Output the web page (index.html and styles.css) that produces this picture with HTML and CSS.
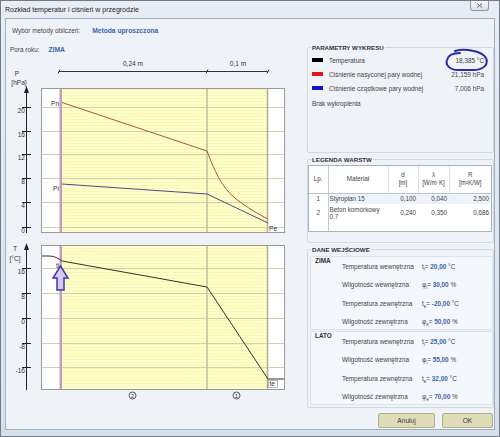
FILE: index.html
```html
<!DOCTYPE html>
<html lang="pl">
  <head>
    <meta charset="utf-8">
    <title>Rozkład temperatur i ciśnień w przegrodzie</title>
    <link rel="stylesheet" href="styles.css">
  </head>
  <body>
    <div class="window">

      <div class="titlebar">
        <span class="title">Rozkład temperatur i ciśnień w przegrodzie</span>
        <span class="close"><svg width="7" height="5" viewBox="0 0 7 5"><path d="M1 0.5 L6 4.5 M6 0.5 L1 4.5"/></svg></span>
      </div>

      <div class="client">

        <section class="chart-panel">
          <div class="field method"><span class="label">Wybór metody obliczeń:</span><span class="value">Metoda uproszczona</span></div>
          <div class="field season"><span class="label">Pora roku:</span><span class="value">ZIMA</span></div>

          <!-- the charts use page coordinates through the viewBox -->
          <svg class="charts" width="295" height="374" viewBox="6 55 295 374">
            <defs>
              <pattern id="layer-fill" width="4" height="3" patternUnits="userSpaceOnUse">
                <rect width="4" height="3" fill="#ffffc6"/>
                <rect y="2" width="4" height="1" fill="#f8f5bd"/>
              </pattern>
            </defs>

            <!-- thickness of layers -->
            <g class="dim">
              <line x1="59" y1="71.5" x2="268" y2="71.5"/>
              <path d="M58 73.5 L60 69.5 M206 73.5 L208 69.5 M267 73.5 L269 69.5"/>
              <text x="133" y="66" text-anchor="middle">0,24 m</text>
              <text x="238" y="66" text-anchor="middle">0,1 m</text>
            </g>

            <!-- pressure chart -->
            <g class="plot">
              <rect class="frame" x="41.5" y="88.5" width="243" height="144"/>
              <rect class="layer" x="62" y="89" width="205" height="143"/>
              <path class="grid" d="M42 107.5 H284 M42 131.5 H284 M42 154.5 H284 M42 178.5 H284 M42 202.5 H284 M42 227.5 H284"/>
              <line class="joint" x1="207" y1="89" x2="207" y2="232"/>
              <line class="edge" x1="267.5" y1="89" x2="267.5" y2="232"/>
              <rect class="membrane" x="59.5" y="89" width="2.5" height="143"/>
            </g>
            <g class="axis">
              <line x1="26.5" y1="91" x2="26.5" y2="233"/>
              <path class="arrow" d="M26.5 86 L24 93 L29 93 Z"/>
              <path d="M22 107.5 H31 M22 131.5 H31 M22 154.5 H31 M22 178.5 H31 M22 202.5 H31 M22 227.5 H31"/>
              <text x="17" y="75.5" text-anchor="middle">P</text>
              <text x="19" y="84.5" text-anchor="middle">[hPa]</text>
              <text x="25" y="113" text-anchor="end">20</text>
              <text x="25" y="137" text-anchor="end">16</text>
              <text x="25" y="160" text-anchor="end">12</text>
              <text x="25" y="184" text-anchor="end">8</text>
              <text x="25" y="208" text-anchor="end">4</text>
              <text x="25" y="233" text-anchor="end">0</text>
            </g>
            <path class="saturated" d="M62 102.5 L207 151 C214 170 222 188 236 199 C248 208 258 214 268 219"/>
            <path class="partial" d="M62 184 L207 194 L268 223"/>
            <text class="tag" x="51" y="105.5">Pn</text>
            <text class="tag" x="53" y="191">Pi</text>
            <text class="tag" x="269" y="230.5">Pe</text>

            <!-- temperature chart -->
            <g class="plot">
              <rect class="frame" x="41.5" y="245.5" width="243" height="144"/>
              <rect class="layer" x="62" y="246" width="205" height="143"/>
              <path class="grid" d="M42 268.5 H284 M42 293.5 H284 M42 318.5 H284 M42 343.5 H284 M42 367.5 H284"/>
              <line class="joint" x1="207" y1="246" x2="207" y2="389"/>
              <line class="edge" x1="267.5" y1="246" x2="267.5" y2="389"/>
              <rect class="membrane" x="59.5" y="246" width="2.5" height="143"/>
            </g>
            <g class="axis">
              <line x1="26.5" y1="248" x2="26.5" y2="390"/>
              <path class="arrow" d="M26.5 243 L24 250 L29 250 Z"/>
              <path d="M22 268.5 H31 M22 293.5 H31 M22 318.5 H31 M22 343.5 H31 M22 367.5 H31"/>
              <text x="15" y="250.5" text-anchor="middle">T</text>
              <text x="15" y="260.5" text-anchor="middle">[°C]</text>
              <text x="25" y="274" text-anchor="end">16</text>
              <text x="25" y="299" text-anchor="end">8</text>
              <text x="25" y="324" text-anchor="end">0</text>
              <text x="25" y="349" text-anchor="end">-8</text>
              <text x="25" y="373" text-anchor="end">-16</text>
            </g>
            <path class="temperature" d="M42 256 L49 256 C54 256 58 258 62 261 L207 287 L268 379 L284 379"/>
            <text class="tag" x="56" y="267.5">ti</text>
            <rect class="tag-box" x="268.5" y="380.5" width="9" height="7"/>
            <text class="tag" x="269.5" y="386">te</text>
            <path class="pointer" d="M60.5 266 L68 278 L64 278 L64 290 L57 290 L57 278 L53 278 Z"/>

            <g class="layer-no">
              <circle cx="132.5" cy="395.5" r="3.5"/>
              <text x="132.5" y="397.5" text-anchor="middle">2</text>
              <circle cx="236.5" cy="395.5" r="3.5"/>
              <text x="236.5" y="397.5" text-anchor="middle">1</text>
            </g>
          </svg>
        </section>

        <section class="side-panel">

          <fieldset class="group params">
            <legend>PARAMETRY WYKRESU</legend>
            <div class="series"><span class="swatch temp"></span><span class="name">Temperatura</span><span class="num">18,385 °C</span></div>
            <div class="series"><span class="swatch sat"></span><span class="name">Ciśnienie nasyconej pary wodnej</span><span class="num">21,159 hPa</span></div>
            <div class="series"><span class="swatch part"></span><span class="name">Ciśnienie cząstkowe pary wodnej</span><span class="num">7,006 hPa</span></div>
            <p class="note">Brak wykroplenia</p>
            <svg class="marker" width="46" height="26" viewBox="0 0 46 26"><path d="M10 3 C20 0 37 3 41 10 C44 17 38 22 28 22 L13 22 C5 22 0 17 2 12 C3 7 8 5 15 5"/></svg>
          </fieldset>

          <fieldset class="group layers">
            <legend>LEGENDA WARSTW</legend>
            <div class="table-box">
              <table>
                <colgroup><col class="c-lp"><col class="c-mat"><col class="c-d"><col class="c-l"><col class="c-r"></colgroup>
                <thead>
                  <tr><th class="lp">Lp.</th><th>Materiał</th><th>d<br>[m]</th><th>λ<br>[W/m·K]</th><th>R<br>[m²K/W]</th></tr>
                </thead>
                <tbody>
                  <tr class="row-1"><td class="lp">1</td><td class="mat">Styropian 15</td><td>0,100</td><td>0,040</td><td>2,500</td></tr>
                  <tr class="row-2"><td class="lp">2</td><td class="mat">Beton komórkowy<br>0.7</td><td>0,240</td><td>0,350</td><td>0,686</td></tr>
                  <tr class="rest"><td class="lp"></td><td colspan="4"></td></tr>
                </tbody>
              </table>
            </div>
          </fieldset>

          <fieldset class="group inputs">
            <legend>DANE WEJŚCIOWE</legend>
            <div class="season-box">
              <h3>ZIMA</h3>
              <ul>
                <li><span class="name">Temperatura wewnętrzna</span><span class="val">t<sub>i</sub>= <b>20,00</b> °C</span></li>
                <li><span class="name">Wilgotność wewnętrzna</span><span class="val">φ<sub>i</sub>= <b>30,00</b> %</span></li>
                <li><span class="name">Temperatura zewnętrzna</span><span class="val">t<sub>e</sub>= <b>-20,00</b> °C</span></li>
                <li><span class="name">Wilgotność zewnętrzna</span><span class="val">φ<sub>e</sub>= <b>50,00</b> %</span></li>
              </ul>
            </div>
            <div class="season-box">
              <h3>LATO</h3>
              <ul>
                <li><span class="name">Temperatura wewnętrzna</span><span class="val">t<sub>i</sub>= <b>25,00</b> °C</span></li>
                <li><span class="name">Wilgotność wewnętrzna</span><span class="val">φ<sub>i</sub>= <b>55,00</b> %</span></li>
                <li><span class="name">Temperatura zewnętrzna</span><span class="val">t<sub>e</sub>= <b>32,00</b> °C</span></li>
                <li><span class="name">Wilgotność zewnętrzna</span><span class="val">φ<sub>e</sub>= <b>70,00</b> %</span></li>
              </ul>
            </div>
          </fieldset>

          <div class="buttons">
            <button class="btn cancel" type="button">Anuluj</button>
            <button class="btn ok" type="button">OK</button>
          </div>

        </section>
      </div>
    </div>
  </body>
</html>
```

FILE: styles.css
```css
html,
body {
  margin: 0;
  padding: 0;
}

*,
*:before,
*:after {
  box-sizing: border-box;
}

body {
  width: 500px;
  height: 437px;
  overflow: hidden;
  font-family: "Liberation Sans", Arial, sans-serif;
  font-size: 6.4px;
  color: #444;
}

/* window frame */

.window {
  width: 500px;
  height: 437px;
  border: 1px solid #717c88;
  background: linear-gradient(to bottom, #e7edf4, #d6e0ea);
  display: flex;
  flex-direction: column;
}

.titlebar {
  height: 17px;
  display: flex;
  justify-content: space-between;
  align-items: flex-start;
  padding: 0 10px 0 4px;
}

.title {
  margin-top: 4px;
  font-size: 7px;
  line-height: 9px;
  color: #1e1e1e;
}

.close {
  width: 19px;
  height: 10px;
  border: 1px solid #8e99a5;
  border-top: none;
  border-radius: 0 0 3px 3px;
  background: linear-gradient(#f8fafc, #d9e1e9);
  display: flex;
  align-items: center;
  justify-content: center;
}

.close path {
  stroke: #666;
  stroke-width: 1;
}

.client {
  flex: 1;
  margin: 0 4px 6px;
  border: 1px solid #a3afbc;
  background: #eff3f8;
  display: flex;
}

/* left: charts */

.chart-panel {
  width: 295px;
  padding-top: 7px;
}

.field {
  display: flex;
  height: 10px;
  line-height: 10px;
}

.field .value {
  color: #3c64ad;
  font-size: 6.7px;
  font-weight: bold;
}

.method {
  padding-left: 6px;
  gap: 12px;
}

.season {
  margin-top: 9px;
  padding-left: 4px;
  gap: 9px;
}

.charts {
  display: block;
  font-family: "Liberation Sans", Arial, sans-serif;
  font-size: 6.6px;
}

.charts text {
  fill: #333;
}

.dim line,
.dim path {
  stroke: #333;
  stroke-width: 1;
  fill: none;
}

.frame {
  fill: #fff;
  stroke: #9a9a9a;
}

.layer {
  fill: url(#layer-fill);
}

.grid {
  stroke: #d3cfaf;
  stroke-width: 1;
}

.joint {
  stroke: #c2bd9b;
  stroke-width: 1.5;
}

.edge {
  stroke: #b3ae8c;
  stroke-width: 1.5;
}

.membrane {
  fill: #c59dc2;
}

.axis line,
.axis path {
  stroke: #222;
  stroke-width: 1;
}

.axis .arrow {
  fill: #222;
  stroke: none;
}

.saturated {
  fill: none;
  stroke: #a6583a;
  stroke-width: 1;
}

.partial {
  fill: none;
  stroke: #4b4b8c;
  stroke-width: 1;
}

.temperature {
  fill: none;
  stroke: #333;
  stroke-width: 1;
}

.tag-box {
  fill: #fff;
  stroke: #aaa;
  stroke-width: 0.8;
}

.pointer {
  fill: #d4cbea;
  stroke: #3a3ab4;
  stroke-width: 1.5;
  stroke-linejoin: miter;
}

.layer-no circle {
  fill: none;
  stroke: #333;
  stroke-width: 0.8;
}

.layer-no text {
  font-size: 5.5px;
}

/* right: parameters */

.side-panel {
  flex: 1;
  padding-left: 6px;
}

.group {
  position: relative;
  margin: 0;
  padding: 0;
  min-width: 0;
  border: 1px solid #d0d8e1;
  border-radius: 2px;
}

.group legend {
  padding: 0 1px;
  font-size: 6.2px;
  font-weight: bold;
  line-height: 9px;
  color: #333;
}

.params {
  margin-top: 23.5px;
  height: 110.5px;
  padding: 3.5px 9px 0 4px;
}

.params legend {
  margin-left: -1px;
}

.series {
  display: flex;
  align-items: center;
  height: 10px;
  margin-bottom: 4px;
}

.swatch {
  width: 11px;
  height: 4px;
  margin-right: 6px;
}

.swatch.temp {
  background: #000;
}

.swatch.sat {
  background: #e3141c;
}

.swatch.part {
  background: #0b15c4;
}

.series .num {
  margin-left: auto;
}

.note {
  margin: 6px 0 0;
  line-height: 10px;
}

/* hand-drawn ring round the temperature */
.marker {
  position: absolute;
  left: 137px;
  top: -4px;
}

.marker path {
  fill: none;
  stroke: #2b2ba3;
  stroke-width: 2;
  stroke-linecap: round;
}

.layers {
  margin-top: 1.5px;
  height: 88.5px;
  padding: 1.5px 0 0 0;
}

.layers legend {
  margin-left: 3px;
}

.table-box {
  width: 184px;
  height: 67px;
  border: 1px solid #a9b2bc;
  background: #fff;
}

table {
  width: 182px;
  height: 65px;
  border-collapse: collapse;
  table-layout: fixed;
  font-size: 6.3px;
}

.c-lp { width: 19px; }
.c-mat { width: 60px; }
.c-d { width: 30px; }
.c-l { width: 31px; }
.c-r { width: 42px; }

th {
  height: 27px;
  padding: 0;
  font-weight: normal;
  line-height: 8px;
  text-align: center;
  border-right: 1px solid #dde1e6;
  border-bottom: 1px solid #bcc4cd;
}

th:last-child {
  border-right: none;
}

td {
  padding: 0 2px 0 0;
  text-align: right;
  line-height: 7.5px;
}

td.lp,
th.lp {
  text-align: center;
  padding: 0;
  border-right: 1px solid #c3cad2;
}

td.mat {
  text-align: left;
  padding-left: 1px;
}

.row-1 td {
  height: 11px;
  background: #edf3fb;
}

.row-1 td.lp {
  background: #fff;
}

.row-2 td {
  height: 18px;
}

.inputs {
  margin-top: 1.5px;
  padding: 2.5px 0 2px 2px;
}

.inputs legend {
  margin-left: 1px;
}

.season-box {
  display: flex;
  height: 74px;
  padding-left: 4px;
  border: 1px solid #dbe2ea;
  border-radius: 2px;
  background: #f4f7fb;
}

.season-box + .season-box {
  margin-top: 1px;
}

.season-box h3 {
  width: 27px;
  margin: 0;
  font-size: 6.4px;
  line-height: 8px;
  font-weight: bold;
  color: #333;
}

.season-box ul {
  list-style: none;
  margin: 0;
  padding: 4.5px 0 0;
  display: flex;
  flex-direction: column;
  gap: 8.5px;
}

.season-box li {
  display: flex;
  height: 10px;
  line-height: 10px;
}

.season-box .name {
  width: 80px;
}

.val sub {
  font-size: 4.5px;
  line-height: 0;
}

.val b {
  color: #3c64ad;
}

.buttons {
  display: flex;
  justify-content: flex-end;
  gap: 7px;
  margin-top: 5px;
  padding-right: 1px;
}

.btn {
  height: 15px;
  padding: 0;
  font-family: "Liberation Sans", Arial, sans-serif;
  font-size: 6.6px;
  color: #3a3a3a;
  background: #dfdcb8;
  border: 1px solid #b3af8c;
  border-radius: 2px;
}

.cancel {
  width: 57px;
}

.ok {
  width: 51px;
}
```
